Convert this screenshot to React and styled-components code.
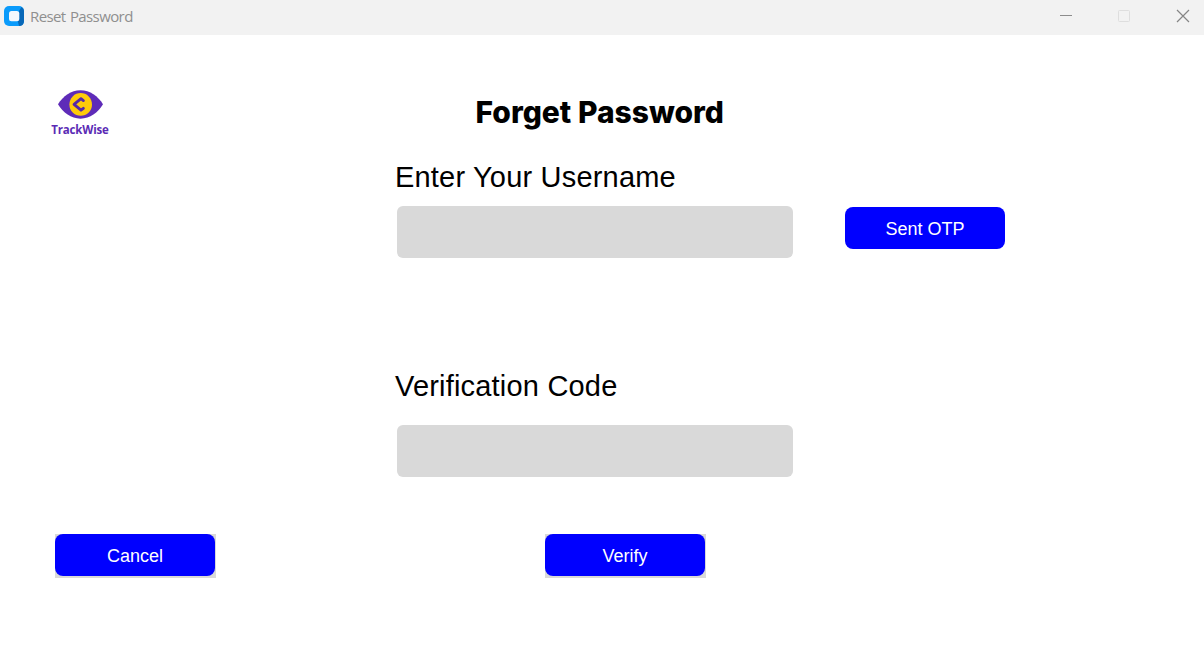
import React from "react";
import styled, { createGlobalStyle } from "styled-components";

const GlobalStyle = createGlobalStyle`
  * { box-sizing: border-box; }
  body { margin: 0; background: #ffffff; overflow: hidden; }
`;

const Window = styled.div`
  width: 1204px;
  height: 654px;
  display: flex;
  flex-direction: column;
  background: #ffffff;
  color: #000000;
  font-family: "Liberation Sans", Arial, sans-serif;
`;

const TitleBar = styled.header`
  height: 35px;
  flex: none;
  display: flex;
  align-items: flex-start;
  background: #f2f2f2;
  padding: 6px 14px 0 4px;
`;

const WindowTitle = styled.span`
  flex: 1;
  margin-left: 6px;
  font: 15px/21px "Open Sans", "Noto Sans", sans-serif;
  letter-spacing: -0.6px;
  word-spacing: 1px;
  color: #8f8f8f;
`;

const WindowControls = styled.div`
  display: flex;
  padding-top: 3px;

  svg { margin-left: 45px; }
  svg:nth-child(2) { margin-left: 44px; }
`;

const Content = styled.main`
  flex: 1;
  display: flex;
  padding: 53px 0 0 50px;
`;

const SideColumn = styled.aside`
  width: 345px;
  display: flex;
  flex-direction: column;
  justify-content: space-between;
  align-items: flex-start;
  padding-left: 5px;
  height: 490px;
`;

const Brand = styled.div`
  width: 60px;
  margin-left: -5px;
  display: flex;
  flex-direction: column;
  align-items: center;
`;

const BrandName = styled.span`
  margin-top: 1px;
  font: 700 11.5px/14px "Open Sans", "Noto Sans", sans-serif;
  letter-spacing: -0.18px;
  color: #5b2bb5;
  white-space: nowrap;
`;

const Form = styled.section`
  width: 640px;
  height: 490px;
  display: flex;
  flex-direction: column;
`;

const Heading = styled.h1`
  margin: 4px 0 0 80.5px;
  font: 800 30px/40px Inter, sans-serif;
  white-space: nowrap;
`;

const Label = styled.label`
  margin-top: ${(p) => p.$top}px;
  font-size: 29px;
  line-height: 34px;
  letter-spacing: 0.19px;
  white-space: nowrap;
`;

const FieldRow = styled.div`
  display: flex;
  align-items: flex-start;
  gap: 52px;
  margin: ${(p) => p.$top}px 0 0 2px;
`;

const Field = styled.input`
  width: 396px;
  height: 52px;
  border: 0;
  border-radius: 6px;
  padding: 0 12px;
  background: #d9d9d9;
  font: 20px "Liberation Sans", Arial, sans-serif;
  outline: none;
`;

const Button = styled.button`
  display: block;
  width: 160px;
  height: 42px;
  margin-top: ${(p) => p.$top || 0}px;
  padding: 2px 0 0;
  border: 0;
  border-radius: 8px;
  background: #0000ff;
  color: #ffffff;
  font: 18px/24px "Liberation Sans", Arial, sans-serif;
`;

const ButtonFrame = styled.div`
  width: 161px;
  height: 44px;
  background: #d9d9d9;
`;

const VerifyFrame = styled(ButtonFrame)`
  margin: auto 0 0 150px;
`;

const AppIcon = () => (
  <svg width="20" height="20" viewBox="0 0 20 20">
    <rect width="20" height="20" rx="5" fill="#0a9bfb" />
    <path d="M15 5 17.5 1Q20 2.3 20 5V15Q20 20 15 20L14 16Z" fill="#0868b8" />
    <rect x="5" y="5" width="10.3" height="10.3" rx="2.5" fill="#f4f8fd" />
  </svg>
);

const EyeLogo = () => (
  <svg width="60" height="34" viewBox="0 0 60 34">
    <path d="M8 16.3C13 8 21 2.2 30.5 2.2S48 8 53 16.3C48 24.5 40 30.7 30.5 30.7S13 24.5 8 16.3Z" fill="#5e2bb8" />
    <circle cx="30.7" cy="16.4" r="11.3" fill="#fecb09" />
    <path d="M33.4 12.6 31 10.7 24 16.4 31 22.2 33.4 20.3" fill="none" stroke="#5428a8" strokeWidth="2.8" strokeLinejoin="round" strokeLinecap="round" />
  </svg>
);

const Controls = () => (
  <WindowControls>
    <svg width="14" height="14" viewBox="0 0 14 14"><path d="M1 6.5H13" stroke="#8c8c8c" /></svg>
    <svg width="14" height="14" viewBox="0 0 14 14"><rect x="1.5" y="1.5" width="11" height="11" rx="1" fill="none" stroke="#dedede" /></svg>
    <svg width="14" height="14" viewBox="0 0 14 14"><path d="M1 1 13 13M13 1 1 13" stroke="#858585" strokeWidth="1.2" /></svg>
  </WindowControls>
);

export default function App() {
  return (
    <Window>
      <GlobalStyle />
      <TitleBar>
        <AppIcon />
        <WindowTitle>Reset Password</WindowTitle>
        <Controls />
      </TitleBar>
      <Content>
        <SideColumn>
          <Brand>
            <EyeLogo />
            <BrandName>TrackWise</BrandName>
          </Brand>
          <ButtonFrame><Button>Cancel</Button></ButtonFrame>
        </SideColumn>
        <Form>
          <Heading>Forget Password</Heading>
          <Label htmlFor="username" $top={28}>Enter Your Username</Label>
          <FieldRow $top={12}>
            <Field id="username" />
            <Button $top={1}>Sent OTP</Button>
          </FieldRow>
          <Label htmlFor="code" $top={111}>Verification Code</Label>
          <FieldRow $top={22}>
            <Field id="code" />
          </FieldRow>
          <VerifyFrame><Button>Verify</Button></VerifyFrame>
        </Form>
      </Content>
    </Window>
  );
}
